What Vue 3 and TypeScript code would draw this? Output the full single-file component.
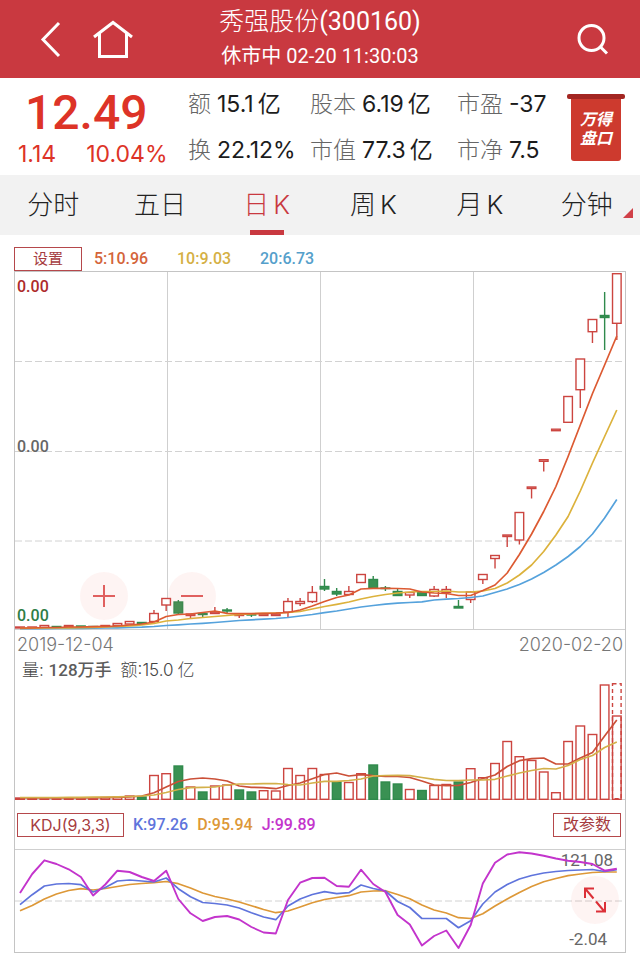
<script setup lang="ts">
import { ref } from 'vue'

type Tone = 'up' | 'down'
type Candle = [top: number, bottom: number, high: number, low: number, tone: Tone]

const STEP = 12.18
const xAt = (i: number): number => 5 + i * STEP

const line = (ys: number[]): string =>
  ys.map((y, i) => `${xAt(i).toFixed(1)},${y}`).join(' ')

const tabs = [
  { name: '分时' },
  { name: '五日' },
  { name: '日', unit: 'K' },
  { name: '周', unit: 'K' },
  { name: '月', unit: 'K' },
  { name: '分钟' },
]
const active = ref(2)

const stats = [
  { label: '额', value: '15.1', unit: '亿' },
  { label: '股本', value: '6.19', unit: '亿' },
  { label: '市盈', value: '-37' },
  { label: '换', value: '22.12%' },
  { label: '市值', value: '77.3', unit: '亿' },
  { label: '市净', value: '7.5' },
]

const candles: Candle[] = [
  [627, 628, 627, 628, 'up'], [627, 628, 627, 628, 'up'], [625.5, 627.5, 625, 628, 'up'],
  [626.5, 627.5, 626, 628, 'down'], [625.5, 627, 625, 627, 'up'], [626, 627, 626, 627, 'down'],
  [626.5, 627, 626, 627.5, 'down'], [625.5, 626.5, 625, 627, 'up'], [623.5, 625.5, 623, 626, 'up'],
  [621.5, 624, 621, 624, 'up'], [622.5, 623.5, 622, 624, 'down'], [613.5, 621.5, 610, 622, 'up'],
  [598.5, 605, 598, 611, 'up'], [602, 613, 600, 614, 'down'], [614, 615.5, 614, 618.5, 'up'],
  [613.5, 614.5, 613, 617, 'down'], [612, 613.5, 607, 614, 'up'], [610, 611, 608, 613, 'down'],
  [614.5, 615.5, 614, 618, 'up'], [614, 615, 614, 617, 'down'], [614, 615.5, 614, 615, 'up'],
  [614, 615.5, 614, 615, 'up'], [601.5, 612, 598, 617, 'up'], [601.5, 603.5, 598, 606, 'up'],
  [592.5, 601.5, 586, 603, 'up'], [586.5, 589, 579, 591, 'down'], [591.5, 594, 588, 596, 'down'],
  [591.5, 594.5, 586, 595, 'up'], [574.5, 582.5, 574.5, 582.5, 'up'], [579.5, 588, 576, 588, 'down'],
  [588, 588.5, 586, 591, 'down'], [591.5, 595.5, 588, 596, 'down'], [592.5, 595, 592, 598, 'up'],
  [592.5, 595.5, 592, 596, 'down'], [589.5, 596, 586, 597, 'up'], [589.5, 592.5, 586, 598, 'up'],
  [606.5, 608, 600, 608, 'down'], [592, 599.5, 591, 603, 'up'], [574.5, 579.5, 574.5, 584, 'up'],
  [555.5, 558.5, 555.5, 568.5, 'up'], [535, 536.5, 535, 547, 'up'], [512.5, 540, 512.5, 544.5, 'up'],
  [487, 488.5, 487, 498.5, 'up'], [459.7, 461.3, 460, 471.5, 'up'], [429.2, 430.7, 430, 430, 'up'],
  [396.5, 422.3, 397, 422, 'up'], [359, 389.7, 359, 408, 'up'], [319.5, 331.7, 320, 343, 'up'],
  [315.5, 317.5, 292, 350, 'down'], [273.7, 323.3, 274, 340, 'up'],
]

const ma5 = [628, 628, 627.5, 627.5, 627, 627, 626.7, 626.3, 626, 625, 624, 622, 616.5, 614.5, 614, 612.5, 611, 613.3, 613.7, 613.7, 613.3, 613.2, 612.5, 610, 606, 601.5, 597.5, 595, 589, 588.3, 588.3, 588.5, 589, 592, 593, 593.5, 595.5, 595.5, 590.5, 585, 573, 554.5, 534, 511.5, 486.5, 456.5, 425, 393.5, 365, 336]
const ma10 = [628.3, 628.2, 628, 628, 627.8, 627.6, 627.3, 627, 626.5, 626, 625, 623.5, 621, 620, 618.5, 617.5, 616.5, 615.5, 614.3, 613.8, 613.3, 613, 612.5, 611.5, 609, 606.5, 604.3, 602, 599, 596.5, 594.5, 593, 592, 591.5, 591.5, 591, 592, 592, 591, 588.5, 583, 575, 565, 551.5, 535, 516.5, 491, 463, 436.5, 410]
const ma20 = [628.7, 628.7, 628.6, 628.5, 628.4, 628.3, 628.2, 628, 627.8, 627.5, 627.2, 626.5, 625.5, 624.8, 624, 623.3, 622.5, 621.5, 620.5, 619.8, 619.2, 618.5, 617.5, 616, 614.5, 612.7, 611, 609, 607, 605.5, 604.2, 603.2, 602.5, 601.8, 600, 599.2, 598.5, 597.5, 596, 592.5, 589, 584.5, 579, 572.5, 565, 556.5, 546.5, 534, 518, 499.5]

const volumes = [798, 798.3, 799, 799, 798, 799, 799, 797.5, 797, 796, 797, 775.5, 773.7, 766, 787, 792, 786, 785, 790, 792, 790.7, 791, 768.5, 775.5, 768.5, 774.5, 782, 782.5, 773.7, 765, 782, 784, 789.5, 790.5, 785.5, 784.5, 782, 768.7, 777.7, 763.5, 741.5, 756.7, 760.5, 772, 792.7, 741.5, 726, 734.5, 685, 716]
const downVolumes = new Set([10, 13, 15, 18, 19, 26, 29, 30, 31, 33, 36])
const vma5 = [798, 798, 798, 798, 798, 797.8, 797.8, 797.6, 797.4, 797, 796, 792.7, 787, 781.5, 779, 778, 779, 781, 786, 787.3, 787.7, 788.7, 785.5, 783, 778.7, 774.5, 773, 776, 774.7, 775.7, 776.3, 776.5, 777.5, 781, 785, 785.7, 785.3, 782.5, 778.5, 775, 766.5, 760.7, 758.7, 758, 764, 764, 758, 752.5, 736, 720]
const vma10 = [797.5, 797.5, 797.5, 797.5, 797.4, 797.3, 797.2, 797, 796.8, 796.5, 796, 795, 792.5, 789.5, 787.7, 787.3, 787, 785, 784, 784, 783.7, 783.5, 784.5, 785, 783, 781.3, 781.3, 780.5, 779, 776, 775.5, 775.3, 775.7, 777.5, 779.3, 780.5, 780.7, 780, 780, 779.3, 776, 773, 770.5, 768.5, 769, 765.5, 759.5, 755.5, 747.5, 742]

const kLine = [904.7, 894.7, 886, 884, 883.5, 884.7, 892, 887.5, 881, 880, 881, 882, 878, 888.7, 896.7, 902.5, 903.5, 905, 908, 912.7, 917, 919.7, 906, 899, 894.5, 891.7, 893.7, 892.7, 885, 888.5, 891, 901.5, 907.5, 918.5, 918.5, 918.5, 927.7, 920.7, 904, 892, 884.5, 879, 875.5, 873, 871.5, 870.5, 870, 869.5, 871.5, 869.7]
const dLine = [910.7, 905.5, 899, 894, 890.5, 888.7, 890, 888.5, 886.5, 884.5, 883.5, 882.7, 881.5, 883.7, 888, 893, 896.5, 899, 902, 905.7, 909.5, 912.7, 911, 907, 902.7, 899.5, 897.5, 895.7, 892, 891, 890.7, 894.5, 898.7, 905, 910, 913, 917.7, 918.5, 913.7, 906, 899, 892.5, 886.5, 881.7, 878.5, 875.7, 874, 872.5, 872, 872]
const jLine = [893, 874, 860.3, 864, 869.3, 877, 895.5, 884.5, 870.7, 872, 877, 881, 870.7, 899, 913.3, 921, 917, 916, 919.5, 927, 932.5, 933.5, 900, 882.7, 878, 877.7, 886, 886.7, 869.7, 884, 892, 915, 924.5, 945.5, 936, 930.5, 948, 925, 883.5, 862.7, 854.5, 852.3, 853.5, 855.7, 858.5, 860.7, 862, 864, 870.7, 868.7]
</script>

<template>
  <div class="page">
    <header class="top">
      <nav class="top-nav">
        <button class="icon-btn" type="button" aria-label="返回">
          <svg width="24" height="38" viewBox="0 0 24 38"><path d="M21 3 5 19.500 21 36" /></svg>
        </button>
        <button class="icon-btn" type="button" aria-label="首页">
          <svg width="42" height="40" viewBox="0 0 42 40"><path d="M2 18 21 3.500 40 18M7.500 14V37.500H34.500V14" /></svg>
        </button>
      </nav>
      <div class="heading">
        <h1>秀强股份<span>(300160)</span></h1>
        <p>休市中 02-20 11:30:03</p>
      </div>
      <div class="top-end">
        <button class="icon-btn" type="button" aria-label="搜索">
          <svg width="32" height="32" viewBox="0 0 32 32"><circle cx="14.500" cy="15" r="12.500" /><path d="M23.500 24 30 30.500" /></svg>
        </button>
      </div>
    </header>

    <section class="quote">
      <div class="price">
        <strong>12.49</strong>
        <div class="change"><span>1.14</span><span>10.04%</span></div>
      </div>
      <dl class="stats">
        <div v-for="s in stats" :key="s.label">
          <dt>{{ s.label }}</dt>
          <dd>{{ s.value }}<span v-if="s.unit" class="unit">{{ s.unit }}</span></dd>
        </div>
      </dl>
      <a class="badge" href="#">万得<br>盘口</a>
    </section>

    <nav class="tabs">
      <button
        v-for="(t, i) in tabs"
        :key="t.name"
        type="button"
        :class="{ active: i === active, more: i === tabs.length - 1 }"
        @click="active = i"
      >{{ t.name }}<span v-if="t.unit" class="unit">{{ t.unit }}</span></button>
    </nav>

    <main class="charts">
      <div class="legend">
        <button class="outline set" type="button">设置</button>
        <span class="c5">5:10.96</span>
        <span class="c10">10:9.03</span>
        <span class="c20">20:6.73</span>
      </div>

      <div class="frame">
        <div class="plot">
          <svg viewBox="0 272 610 358" class="chart">
            <path class="grid" d="M152.500 272V630M305.500 272V630M458.500 272V630M0 629.500H610" />
            <path class="dash" d="M0 361.500H610M0 451.500H610M0 541H610" />
            <g v-for="(c, i) in candles" :key="i" :class="c[4]">
              <path :d="`M${xAt(i)} ${c[2]}V${c[0]}M${xAt(i)} ${c[1]}V${c[3]}`" />
              <rect :x="xAt(i) - 4.3" :y="c[0]" width="8.6" :height="c[1] - c[0]" />
            </g>
            <polyline class="line s20" :points="line(ma20)" />
            <polyline class="line s10" :points="line(ma10)" />
            <polyline class="line s5" :points="line(ma5)" />
          </svg>
          <span class="axis high">0.00</span>
          <span class="axis mid">0.00</span>
          <span class="axis low">0.00</span>
          <div class="zoomers">
            <button class="round" type="button" aria-label="放大">
              <svg width="24" height="24" viewBox="0 0 24 24"><path d="M12 1V23M1 12H23" /></svg>
            </button>
            <button class="round" type="button" aria-label="缩小">
              <svg width="24" height="24" viewBox="0 0 24 24"><path d="M1 12H23" /></svg>
            </button>
          </div>
        </div>

        <div class="dates"><span>2019-12-04</span><span>2020-02-20</span></div>
        <div class="vol-info">
          <span>量: <b>128万手</b></span>
          <span>额:15.0<span class="unit">亿</span></span>
        </div>

        <svg viewBox="0 683 610 117" class="chart">
          <path class="grid" d="M0 799.500H610" />
          <g v-for="(v, i) in volumes" :key="i" :class="downVolumes.has(i) ? 'down' : 'up'">
            <rect :x="xAt(i) - 4.3" :y="v" width="8.6" :height="799.3 - v" />
          </g>
          <rect class="forecast" x="597.5" y="683.7" width="8.6" height="115" />
          <polyline class="line v5" :points="line(vma5)" />
          <polyline class="line v10" :points="line(vma10)" />
        </svg>

        <div class="kdj">
          <button class="outline name" type="button">KDJ(9,3,3)</button>
          <span class="k">K:97.26</span>
          <span class="d">D:95.94</span>
          <span class="j">J:99.89</span>
          <button class="outline edit" type="button">改参数</button>
        </div>

        <div class="plot">
          <svg viewBox="0 849 610 103" class="chart">
            <path class="grid" d="M0 849.500H610" />
            <path class="dash" d="M0 901H610" />
          </svg>
          <span class="axis max">121.08</span>
          <span class="axis min">-2.04</span>
          <button class="round expand" type="button" aria-label="全屏">
            <svg width="24" height="28" viewBox="0 0 24 28"><path d="M10.500 12.500 2.500 3M2 12V2.500H11M13 15.500 21 25M22 16V25.500H13" /></svg>
          </button>
          <svg viewBox="0 849 610 103" class="chart over">
            <polyline class="line ld" :points="line(dLine)" />
            <polyline class="line lk" :points="line(kLine)" />
            <polyline class="line lj" :points="line(jLine)" />
          </svg>
        </div>
      </div>
    </main>
  </div>
</template>

<style>
body {
  margin: 0;
  background: #fff;
}
</style>

<style scoped>
.page {
  font-family: Roboto, "Noto Sans CJK SC", sans-serif;
  color: #222;
  background: #fff;
}
button {
  font: inherit;
  color: inherit;
  background: none;
  border: 0;
  padding: 0;
  cursor: pointer;
}
h1, p, dl, dt, dd {
  margin: 0;
  font-weight: 400;
}
svg {
  display: block;
  fill: none;
}
.unit {
  margin-left: 4px;
}

/* header */
.top {
  display: grid;
  grid-template-columns: 1fr auto 1fr;
  height: 78px;
  background: #c93940;
  color: #fff;
}
.top-nav {
  display: flex;
  align-items: center;
  gap: 30px;
  padding-left: 38px;
}
.top-end {
  display: flex;
  align-items: center;
  justify-content: flex-end;
  padding-right: 31px;
}
.icon-btn svg {
  stroke: #fff;
  stroke-width: 3;
}
.heading {
  text-align: center;
}
.heading h1 {
  font-size: 25px;
  line-height: 36px;
  padding-top: 4px;
  font-weight: 300;
}
.heading h1 span {
  font-weight: 400;
}
.heading p {
  font-size: 20px;
  line-height: 32px;
}

/* quote */
.quote {
  display: flex;
  height: 97px;
  color: #1c1c1c;
}
.price {
  width: 188px;
  color: #dd3327;
}
.price strong {
  display: block;
  padding: 10px 0 0 25px;
  font-size: 48px;
  line-height: 50px;
  font-weight: 500;
}
.change {
  display: flex;
  gap: 30px;
  padding-left: 18px;
  font: 23px/32px Inter, sans-serif;
}
.stats {
  flex: 1;
  display: grid;
  grid-template-columns: 122px 147px auto;
  grid-auto-rows: 46px;
  padding-top: 3px;
}
.stats div {
  display: flex;
  align-items: center;
  gap: 6px;
  white-space: nowrap;
  font: 23px/46px Inter, "Noto Sans CJK SC", sans-serif;
}
.stats dt {
  color: #666;
  font-weight: 300;
}
.badge {
  position: relative;
  align-self: flex-start;
  box-sizing: border-box;
  width: 50px;
  height: 67px;
  margin: 16px 19px 0 0;
  padding-top: 16px;
  border-radius: 0 0 3px 3px;
  background: #cd3a2e;
  color: #fff;
  font: italic 700 16px/19px Roboto, "Noto Sans CJK SC", sans-serif;
  text-align: center;
  text-decoration: none;
}
.badge::before {
  content: "";
  position: absolute;
  top: 0;
  left: -4px;
  right: -4px;
  height: 5px;
  border-radius: 2px;
  background: #a32622;
}

/* period tabs */
.tabs {
  display: grid;
  grid-template-columns: repeat(6, 1fr);
  height: 60px;
  background: #f2f2f2;
}
.tabs button {
  position: relative;
  font: 300 26px/60px Inter, "Noto Sans CJK SC", sans-serif;
  color: #222;
}
.tabs .active {
  color: #c93940;
}
.tabs .active::after {
  content: "";
  position: absolute;
  left: 50%;
  bottom: 0;
  width: 34px;
  height: 5px;
  margin-left: -17px;
  background: #c93940;
}
.tabs .more::after {
  content: "";
  position: absolute;
  right: 7px;
  bottom: 17px;
  border-left: 10px solid transparent;
  border-bottom: 10px solid #d04048;
}

/* charts */
.charts {
  padding: 11px 14px 2px;
}
.legend {
  display: flex;
  align-items: center;
  height: 25px;
  font-size: 16px;
  font-weight: 500;
}
.outline {
  box-sizing: border-box;
  height: 24px;
  border: 1px solid #b5484b;
  font-size: 16px;
  line-height: 20px;
  font-weight: 400;
  color: #a63c40;
}
.set {
  width: 68px;
  font-size: 15px;
  margin-right: 12px;
}
.legend span {
  width: 83px;
}
.legend .c5 { color: #d4643a; }
.legend .c10 { color: #d5b044; }
.legend .c20 { color: #559fcb; }

.frame {
  border: 1px solid #c4c4c4;
}
.plot {
  position: relative;
}
.chart {
  width: 100%;
  height: auto;
}
.over {
  position: absolute;
  inset: 0;
  pointer-events: none;
}
.grid { stroke: #cfcfcf; stroke-width: 1; }
.dash { stroke: #d2d2d2; stroke-width: 1; stroke-dasharray: 7 3; }
.up { stroke: #cc4540; stroke-width: 1.4; }
.up rect { fill: #fff; }
.down { stroke: #2f8a4c; stroke-width: 1.4; }
.down rect { fill: #3a9153; }
.line { stroke-width: 1.7; stroke-linejoin: round; }
.s5 { stroke: #dc5a32; }
.s10 { stroke: #dcb23c; }
.s20 { stroke: #55a2dc; }
.v5 { stroke: #cb5038; }
.v10 { stroke: #d3b04a; }
.lk { stroke: #5f74dc; }
.ld { stroke: #dd9838; }
.lj { stroke: #c334cc; stroke-width: 1.9; }
.forecast { stroke: #cc4540; stroke-width: 1.4; stroke-dasharray: 4 3; }

.axis {
  position: absolute;
  left: 2px;
  font-size: 16px;
  line-height: 20px;
  font-weight: 500;
  color: #666;
}
.high { top: 5px; color: #ad2b2b; }
.mid { top: 165px; }
.low { bottom: 4px; color: #2e7d46; }
.max, .min {
  left: auto;
  font-size: 17px;
  font-weight: 400;
}
.max { right: 12px; top: 1px; }
.min { right: 18px; bottom: 3px; }

.zoomers {
  position: absolute;
  left: 65px;
  bottom: 10px;
  display: flex;
  gap: 40px;
}
.round {
  display: grid;
  place-items: center;
  width: 48px;
  height: 48px;
  border-radius: 50%;
  background: rgba(236, 110, 100, 0.08);
}
.round svg {
  stroke: #e0605f;
  stroke-width: 2;
}
.expand {
  position: absolute;
  right: 6px;
  bottom: 28px;
}
.expand svg {
  stroke: #dc3038;
}

.dates {
  display: flex;
  justify-content: space-between;
  padding: 3px 2px 0;
  font: 300 18px/24px Inter, sans-serif;
  color: #777;
}
.vol-info {
  display: flex;
  gap: 9px;
  padding: 1px 7px;
  font: 300 17px/24px Inter, "Noto Sans CJK SC", sans-serif;
  color: #444;
}
.vol-info b {
  font-family: Roboto, "Noto Sans CJK SC", sans-serif;
  font-weight: 500;
  color: #5c5c5c;
}
.kdj {
  display: flex;
  align-items: center;
  height: 49px;
  padding: 0 4px 0 2px;
  gap: 9px;
  font-size: 16px;
  font-weight: 500;
}
.name {
  width: 107px;
  font-family: Inter, sans-serif;
}
.edit {
  width: 68px;
  margin-left: auto;
}
.k { color: #5f74dc; }
.d { color: #dd9838; }
.j { color: #c334cc; }
</style>
